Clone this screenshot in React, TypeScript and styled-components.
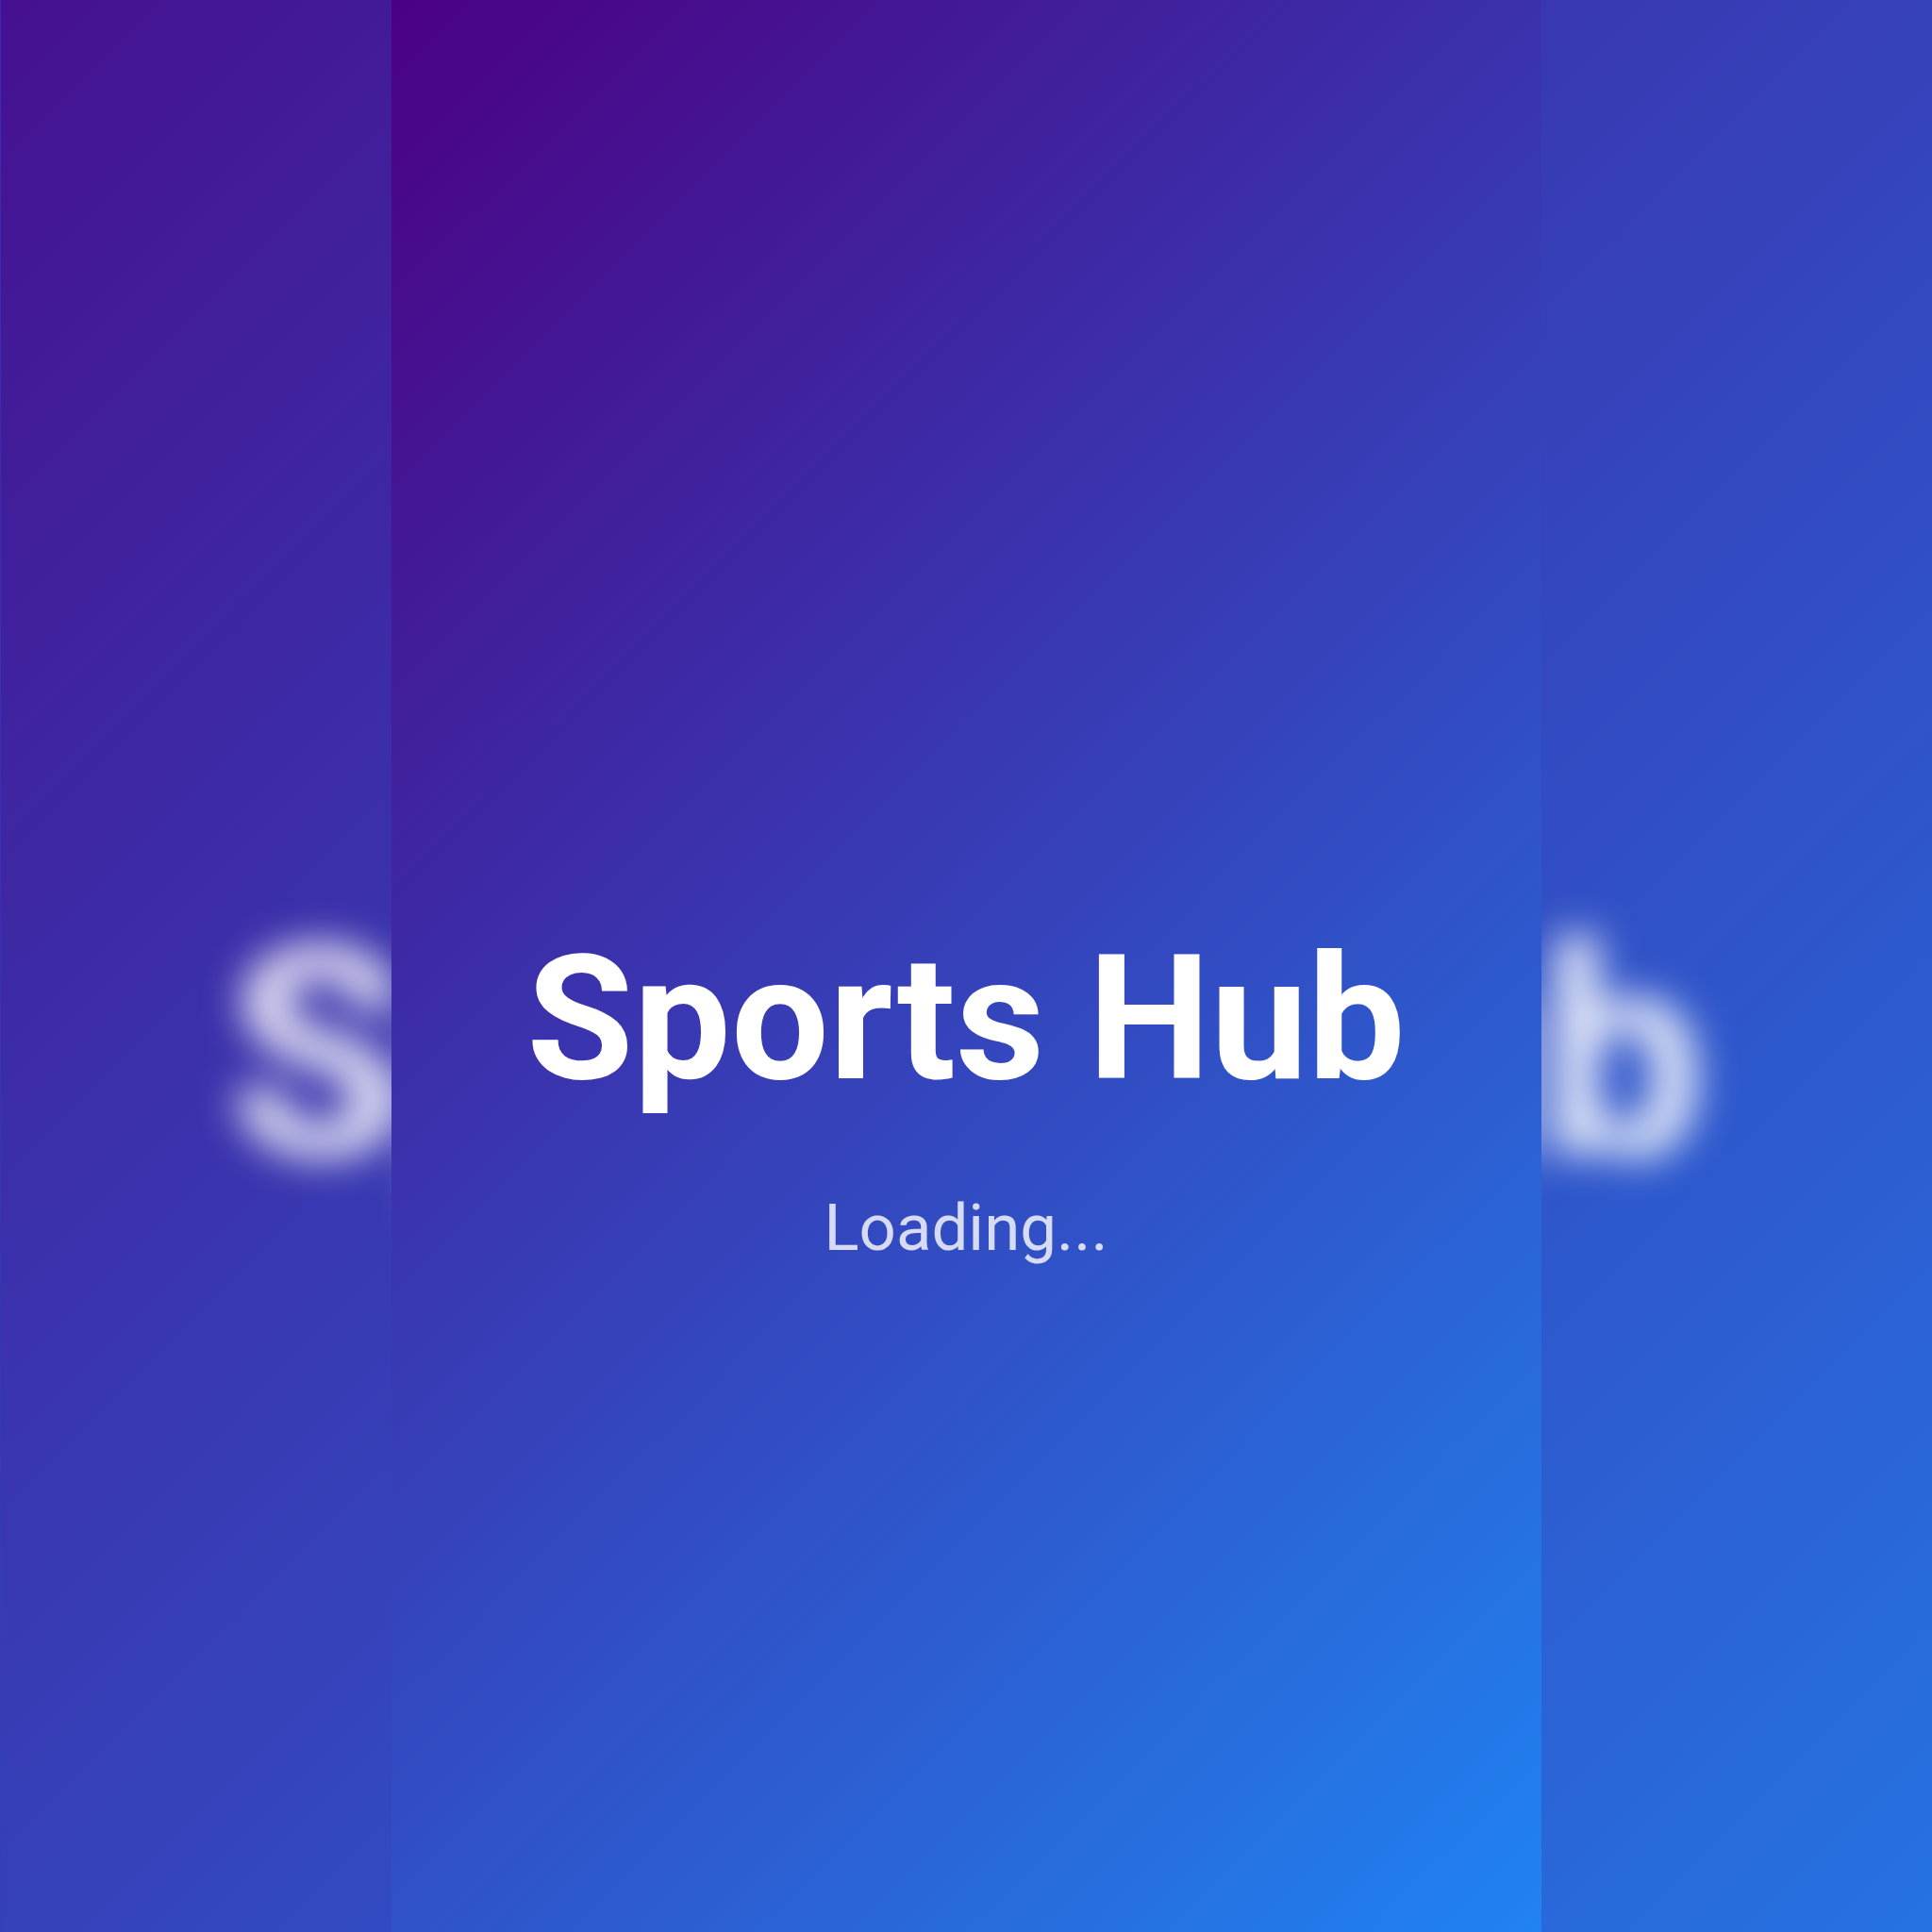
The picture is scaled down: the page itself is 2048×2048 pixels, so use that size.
import React from "react";
import styled, { createGlobalStyle, css } from "styled-components";

const GlobalStyle = createGlobalStyle`
  html, body {
    margin: 0;
    padding: 0;
    background: #2f3fbf;
  }
  #root {
    width: 2048px;
    height: 2048px;
  }
`;

const Page = styled.div`
  position: relative;
  width: 2048px;
  height: 2048px;
  overflow: hidden;
  display: flex;
  justify-content: center;
  align-items: stretch;
`;

const Backdrop = styled.div`
  position: absolute;
  inset: 0;
  display: flex;
  align-items: center;
  justify-content: center;
  overflow: hidden;
  z-index: 0;
`;

const Screen = styled.main<{ $scale?: number; $blurred?: boolean }>`
  position: relative;
  z-index: 1;
  flex: 0 0 auto;
  width: 1219px;
  height: 2048px;
  box-sizing: border-box;
  padding-top: 266px;
  display: flex;
  flex-direction: column;
  align-items: center;
  justify-content: center;
  background: linear-gradient(135deg, #4b0082 0%, #2083f1 100%);
  ${(p) =>
    p.$scale &&
    css`
      transform: scale(${p.$scale});
      transform-origin: center center;
    `}
  ${(p) =>
    p.$blurred &&
    css`
      & > * {
        filter: blur(13px);
        opacity: 0.92;
      }
    `}
`;

const Title = styled.h1`
  margin: 0;
  font-family: Roboto, "Liberation Sans", Arial, sans-serif;
  font-weight: 700;
  font-size: 184px;
  line-height: 1.2;
  color: #ffffff;
  white-space: nowrap;
`;

const Status = styled.p`
  margin: 70px 0 0;
  font-family: Roboto, "Liberation Sans", Arial, sans-serif;
  font-weight: 400;
  font-size: 69px;
  line-height: 1.2;
  color: rgba(255, 255, 255, 0.8);
  white-space: nowrap;
`;

function SplashContent() {
  return (
    <>
      <Title>Sports Hub</Title>
      <Status>Loading...</Status>
    </>
  );
}

export default function App() {
  return (
    <>
      <GlobalStyle />
      <Page>
        <Backdrop aria-hidden="true">
          <Screen $scale={1.68} $blurred>
            <SplashContent />
          </Screen>
        </Backdrop>
        <Screen>
          <SplashContent />
        </Screen>
      </Page>
    </>
  );
}
